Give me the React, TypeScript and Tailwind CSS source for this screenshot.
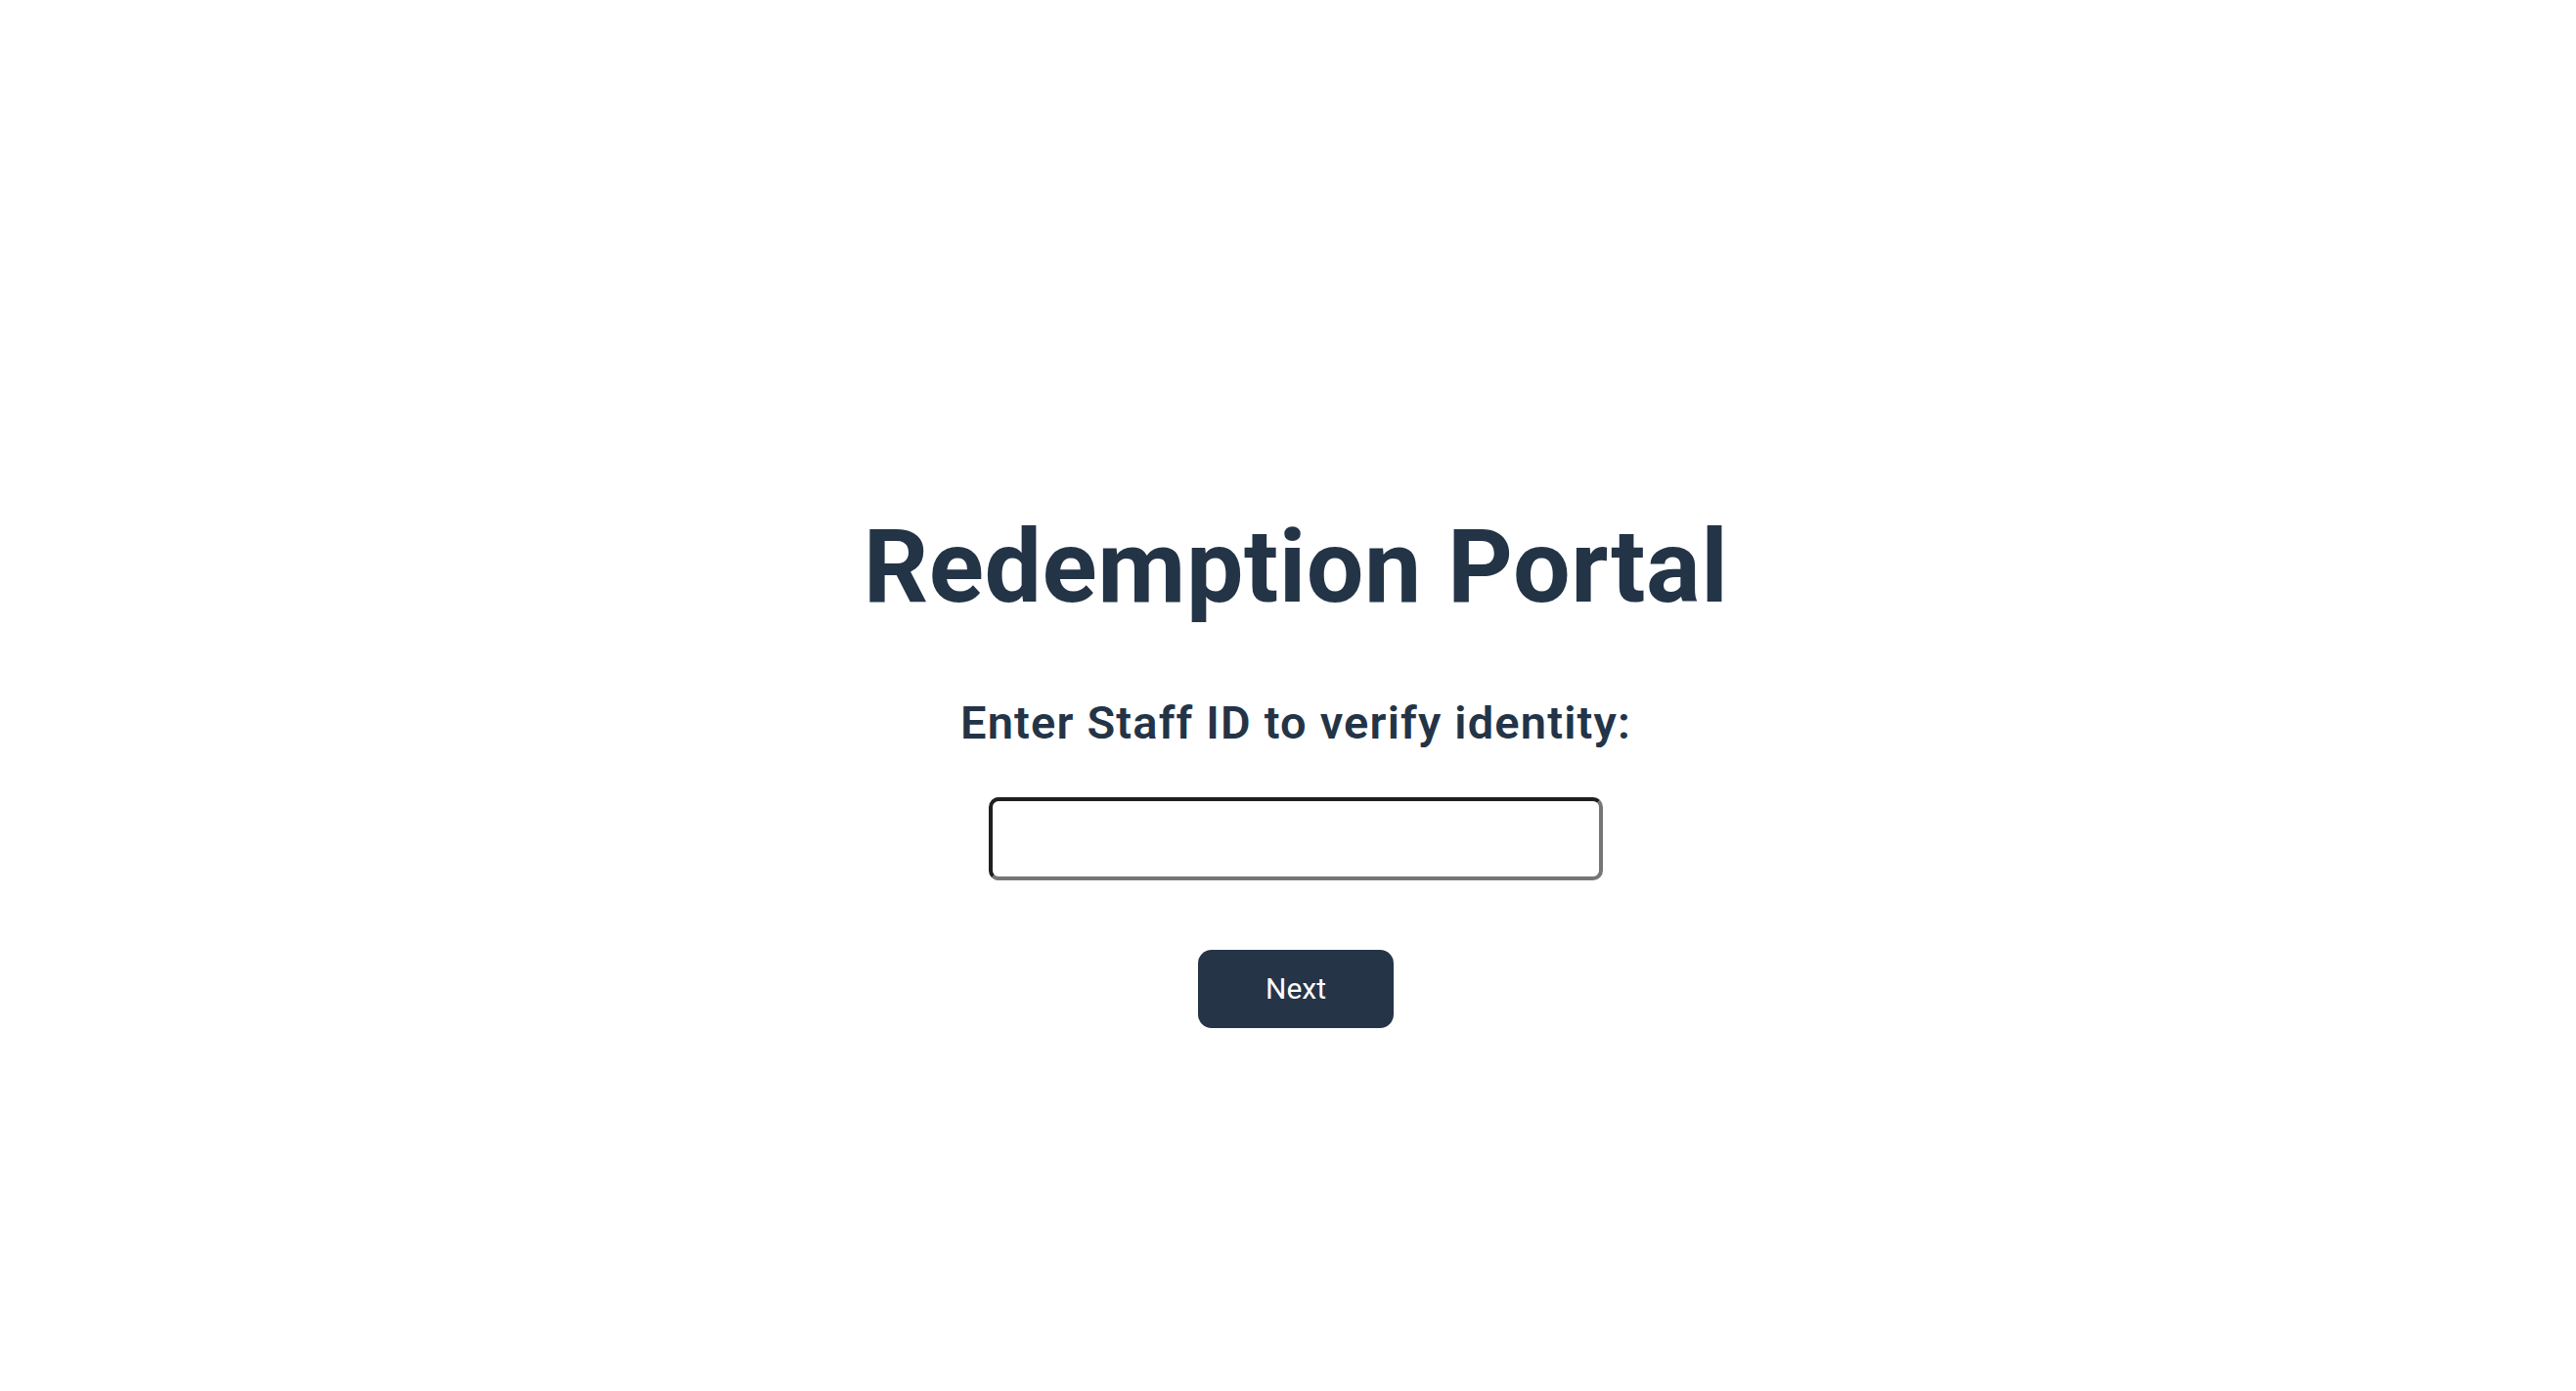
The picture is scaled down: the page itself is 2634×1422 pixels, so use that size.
import { useState } from "react"

export default function App() {
  const [staffId, setStaffId] = useState("")

  return (
    <div className="min-h-screen overflow-hidden bg-white font-['Roboto',sans-serif] text-[#243447]">
      <div className="ml-2 flex w-screen flex-col items-center pt-[528px]">
        <h1 className="text-[104px] font-bold leading-none tracking-[0.005em]">Redemption Portal</h1>

        <p className="mt-[83px] text-[47px] font-semibold leading-none tracking-wide">
          Enter Staff ID to verify identity:
        </p>

        <input
          type="text"
          value={staffId}
          onChange={(e) => setStaffId(e.target.value)}
          className="mt-[53px] h-[85px] w-[628px] rounded-[10px] border-4 border-t-[#1f1f1f] border-l-[#1f1f1f] border-r-[#767676] border-b-[#767676] bg-white px-4 text-[30px] outline-none"
        />

        <button
          type="button"
          className="mt-[71px] h-[80px] w-[200px] rounded-[14px] bg-[#253447] text-[30px] font-normal leading-none text-white"
        >
          Next
        </button>
      </div>
    </div>
  )
}
